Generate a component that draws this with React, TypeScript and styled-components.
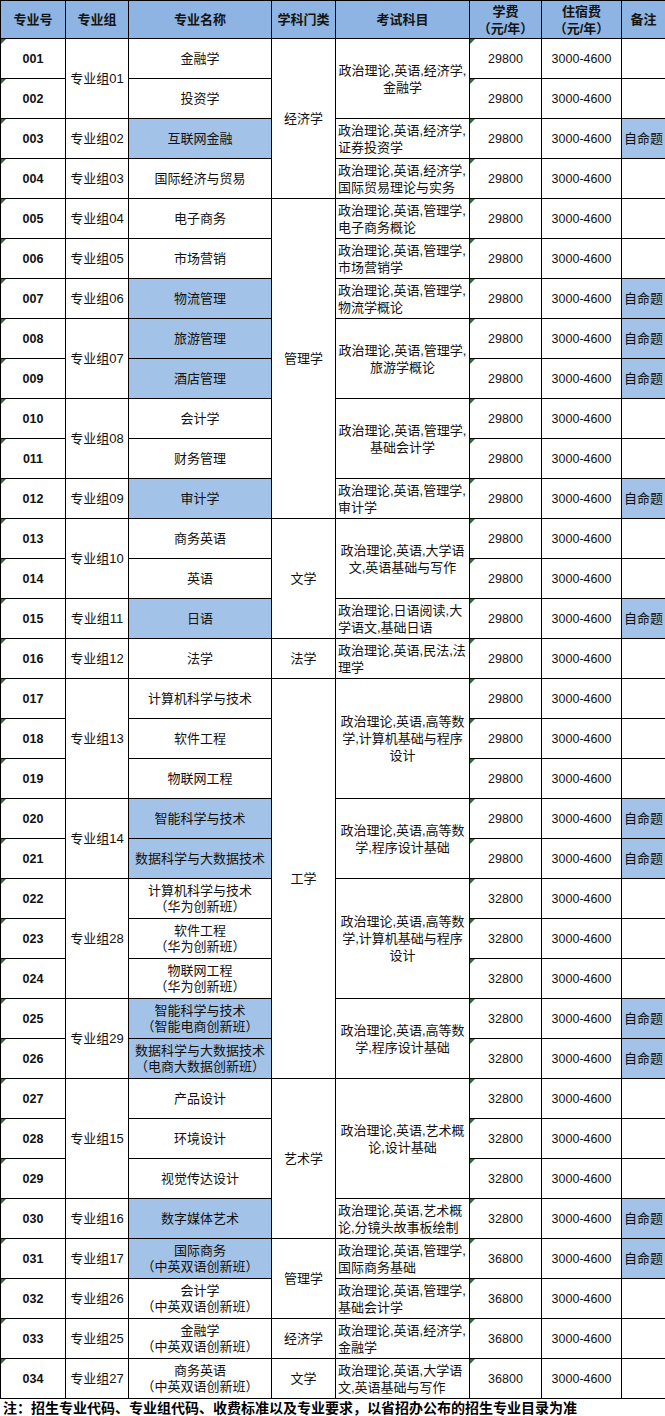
import React from 'react'
import styled, { createGlobalStyle } from 'styled-components'

interface Span {
  text: string
  span?: number
}

interface ExamSpan {
  lines: string[]
  span?: number
}

interface Row {
  no: string
  group?: Span
  major: string[]
  hl?: boolean
  subject?: Span
  exam?: ExamSpan
  fee: string
  note?: boolean
}

const GlobalStyle = createGlobalStyle`
  html, body {
    margin: 0;
    padding: 0;
    background: #ffffff;
  }
  body {
    font-family: "Liberation Sans", "Noto Sans CJK SC", Arial, sans-serif;
    color: #111;
  }
`

const Page = styled.div`
  width: 665px;
`

const Sheet = styled.table`
  width: 665px;
  table-layout: fixed;
  border-collapse: collapse;
  font-size: 13px;
`

const HeadRow = styled.tr`
  height: 38px;
`

const BodyRow = styled.tr`
  height: 40px;
`

const HeadCell = styled.th`
  background: #8db4e2;
  border: 1px solid #000;
  padding: 0;
  font-weight: bold;
  font-size: 13px;
  line-height: 17px;
  color: #141414;
  text-align: center;
  vertical-align: middle;
`

const Cell = styled.td<{ $hl?: boolean }>`
  border: 1px solid #000;
  padding: 0;
  text-align: center;
  vertical-align: middle;
  line-height: 16px;
  background: ${(p) => (p.$hl ? '#a3c2e7' : '#ffffff')};
  white-space: nowrap;
`

const FlagCell = styled(Cell)`
  position: relative;
  &::before {
    content: '';
    position: absolute;
    top: 0;
    left: 0;
    border-top: 5px solid #2c6b3a;
    border-right: 5px solid transparent;
  }
`

const NoCell = styled(FlagCell)`
  font-weight: bold;
  font-size: 12.5px;
`

const FeeCell = styled(FlagCell)`
  font-size: 12.5px;
`

const DormCell = styled(Cell)`
  font-size: 12.5px;
`

const ExamCell = styled(Cell)<{ $left: boolean }>`
  text-align: ${(p) => (p.$left ? 'left' : 'center')};
  padding-left: ${(p) => (p.$left ? '2px' : '0')};
  line-height: 17px;
`

const Line = styled.span`
  display: block;
`

const Footer = styled.div`
  height: 18px;
  padding-left: 3px;
  font-size: 14px;
  line-height: 18px;
  font-weight: bold;
  color: #000;
  white-space: nowrap;
`

const widths = [65, 63, 143, 64, 134, 72, 80, 44]

const calc = ['政治理论,英语,高等数', '学,计算机基础与程序', '设计']
const prog = ['政治理论,英语,高等数', '学,程序设计基础']

const rows: Row[] = [
  { no: '001', group: { text: '专业组01', span: 2 }, major: ['金融学'], subject: { text: '经济学', span: 4 }, exam: { lines: ['政治理论,英语,经济学,', '金融学'], span: 2 }, fee: '29800' },
  { no: '002', major: ['投资学'], fee: '29800' },
  { no: '003', group: { text: '专业组02' }, major: ['互联网金融'], hl: true, exam: { lines: ['政治理论,英语,经济学,', '证券投资学'] }, fee: '29800', note: true },
  { no: '004', group: { text: '专业组03' }, major: ['国际经济与贸易'], exam: { lines: ['政治理论,英语,经济学,', '国际贸易理论与实务'] }, fee: '29800' },
  { no: '005', group: { text: '专业组04' }, major: ['电子商务'], subject: { text: '管理学', span: 8 }, exam: { lines: ['政治理论,英语,管理学,', '电子商务概论'] }, fee: '29800' },
  { no: '006', group: { text: '专业组05' }, major: ['市场营销'], exam: { lines: ['政治理论,英语,管理学,', '市场营销学'] }, fee: '29800' },
  { no: '007', group: { text: '专业组06' }, major: ['物流管理'], hl: true, exam: { lines: ['政治理论,英语,管理学,', '物流学概论'] }, fee: '29800', note: true },
  { no: '008', group: { text: '专业组07', span: 2 }, major: ['旅游管理'], hl: true, exam: { lines: ['政治理论,英语,管理学,', '旅游学概论'], span: 2 }, fee: '29800', note: true },
  { no: '009', major: ['酒店管理'], hl: true, fee: '29800', note: true },
  { no: '010', group: { text: '专业组08', span: 2 }, major: ['会计学'], exam: { lines: ['政治理论,英语,管理学,', '基础会计学'], span: 2 }, fee: '29800' },
  { no: '011', major: ['财务管理'], fee: '29800' },
  { no: '012', group: { text: '专业组09' }, major: ['审计学'], hl: true, exam: { lines: ['政治理论,英语,管理学,', '审计学'] }, fee: '29800', note: true },
  { no: '013', group: { text: '专业组10', span: 2 }, major: ['商务英语'], subject: { text: '文学', span: 3 }, exam: { lines: ['政治理论,英语,大学语', '文,英语基础与写作'], span: 2 }, fee: '29800' },
  { no: '014', major: ['英语'], fee: '29800' },
  { no: '015', group: { text: '专业组11' }, major: ['日语'], hl: true, exam: { lines: ['政治理论,日语阅读,大', '学语文,基础日语'] }, fee: '29800', note: true },
  { no: '016', group: { text: '专业组12' }, major: ['法学'], subject: { text: '法学' }, exam: { lines: ['政治理论,英语,民法,法', '理学'] }, fee: '29800' },
  { no: '017', group: { text: '专业组13', span: 3 }, major: ['计算机科学与技术'], subject: { text: '工学', span: 10 }, exam: { lines: calc, span: 3 }, fee: '29800' },
  { no: '018', major: ['软件工程'], fee: '29800' },
  { no: '019', major: ['物联网工程'], fee: '29800' },
  { no: '020', group: { text: '专业组14', span: 2 }, major: ['智能科学与技术'], hl: true, exam: { lines: prog, span: 2 }, fee: '29800', note: true },
  { no: '021', major: ['数据科学与大数据技术'], hl: true, fee: '29800', note: true },
  { no: '022', group: { text: '专业组28', span: 3 }, major: ['计算机科学与技术', '（华为创新班）'], exam: { lines: calc, span: 3 }, fee: '32800' },
  { no: '023', major: ['软件工程', '（华为创新班）'], fee: '32800' },
  { no: '024', major: ['物联网工程', '（华为创新班）'], fee: '32800' },
  { no: '025', group: { text: '专业组29', span: 2 }, major: ['智能科学与技术', '（智能电商创新班）'], hl: true, exam: { lines: prog, span: 2 }, fee: '32800', note: true },
  { no: '026', major: ['数据科学与大数据技术', '（电商大数据创新班）'], hl: true, fee: '32800', note: true },
  { no: '027', group: { text: '专业组15', span: 3 }, major: ['产品设计'], subject: { text: '艺术学', span: 4 }, exam: { lines: ['政治理论,英语,艺术概', '论,设计基础'], span: 3 }, fee: '32800' },
  { no: '028', major: ['环境设计'], fee: '32800' },
  { no: '029', major: ['视觉传达设计'], fee: '32800' },
  { no: '030', group: { text: '专业组16' }, major: ['数字媒体艺术'], hl: true, exam: { lines: ['政治理论,英语,艺术概', '论,分镜头故事板绘制'] }, fee: '32800', note: true },
  { no: '031', group: { text: '专业组17' }, major: ['国际商务', '（中英双语创新班）'], hl: true, subject: { text: '管理学', span: 2 }, exam: { lines: ['政治理论,英语,管理学,', '国际商务基础'] }, fee: '36800', note: true },
  { no: '032', group: { text: '专业组26' }, major: ['会计学', '（中英双语创新班）'], exam: { lines: ['政治理论,英语,管理学,', '基础会计学'] }, fee: '36800' },
  { no: '033', group: { text: '专业组25' }, major: ['金融学', '（中英双语创新班）'], subject: { text: '经济学' }, exam: { lines: ['政治理论,英语,经济学,', '金融学'] }, fee: '36800' },
  { no: '034', group: { text: '专业组27' }, major: ['商务英语', '（中英双语创新班）'], subject: { text: '文学' }, exam: { lines: ['政治理论,英语,大学语', '文,英语基础与写作'] }, fee: '36800' }
]

const App: React.FC = () => {
  return (
    <Page>
      <GlobalStyle />
      <Sheet>
        <colgroup>
          {widths.map((w, i) => (
            <col key={i} style={{ width: w }} />
          ))}
        </colgroup>
        <thead>
          <HeadRow>
            <HeadCell>专业号</HeadCell>
            <HeadCell>专业组</HeadCell>
            <HeadCell>专业名称</HeadCell>
            <HeadCell>学科门类</HeadCell>
            <HeadCell>考试科目</HeadCell>
            <HeadCell>
              学费
              <Line>（元/年）</Line>
            </HeadCell>
            <HeadCell>
              住宿费
              <Line>（元/年）</Line>
            </HeadCell>
            <HeadCell>备注</HeadCell>
          </HeadRow>
        </thead>
        <tbody>
          {rows.map((r) => (
            <BodyRow key={r.no}>
              <NoCell>{r.no}</NoCell>
              {r.group && <Cell rowSpan={r.group.span || 1}>{r.group.text}</Cell>}
              <Cell $hl={r.hl}>
                {r.major.map((m, i) => (
                  <Line key={i}>{m}</Line>
                ))}
              </Cell>
              {r.subject && <Cell rowSpan={r.subject.span || 1}>{r.subject.text}</Cell>}
              {r.exam && (
                <ExamCell rowSpan={r.exam.span || 1} $left={!r.exam.span}>
                  {r.exam.lines.map((l, i) => (
                    <Line key={i}>{l}</Line>
                  ))}
                </ExamCell>
              )}
              <FeeCell>{r.fee}</FeeCell>
              <DormCell>3000-4600</DormCell>
              <Cell $hl={r.note}>{r.note ? '自命题' : ''}</Cell>
            </BodyRow>
          ))}
        </tbody>
      </Sheet>
      <Footer>注：招生专业代码、专业组代码、收费标准以及专业要求，以省招办公布的招生专业目录为准</Footer>
    </Page>
  )
}

export default App
